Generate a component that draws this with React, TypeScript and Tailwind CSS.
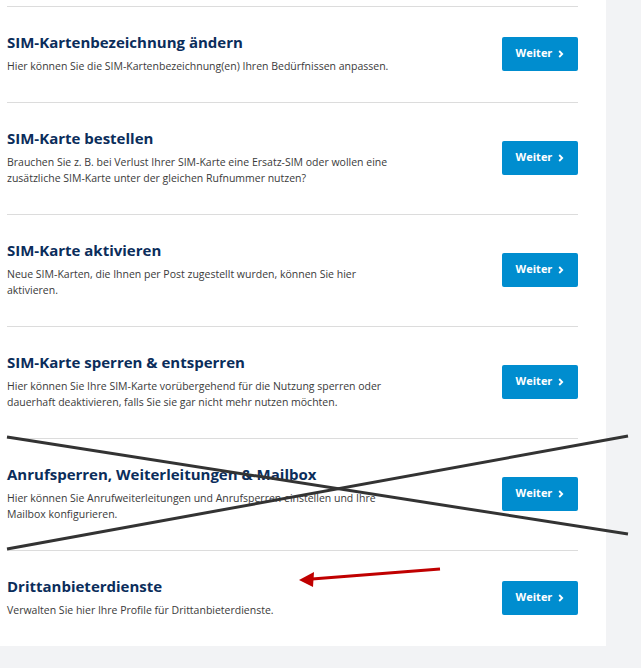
import React from "react";

const items = [
  {
    title: "SIM-Kartenbezeichnung ändern",
    text: "Hier können Sie die SIM-Kartenbezeichnung(en) Ihren Bedürfnissen anpassen.",
  },
  {
    title: "SIM-Karte bestellen",
    text: "Brauchen Sie z. B. bei Verlust Ihrer SIM-Karte eine Ersatz-SIM oder wollen eine zusätzliche SIM-Karte unter der gleichen Rufnummer nutzen?",
  },
  {
    title: "SIM-Karte aktivieren",
    text: "Neue SIM-Karten, die Ihnen per Post zugestellt wurden, können Sie hier aktivieren.",
  },
  {
    title: "SIM-Karte sperren & entsperren",
    text: "Hier können Sie Ihre SIM-Karte vorübergehend für die Nutzung sperren oder dauerhaft deaktivieren, falls Sie sie gar nicht mehr nutzen möchten.",
  },
  {
    title: "Anrufsperren, Weiterleitungen & Mailbox",
    text: "Hier können Sie Anrufweiterleitungen und Anrufsperren einstellen und Ihre Mailbox konfigurieren.",
  },
  {
    title: "Drittanbieterdienste",
    text: "Verwalten Sie hier Ihre Profile für Drittanbieterdienste.",
  },
];

const Row = ({ title, text, last }: { title: string; text: string; last: boolean }) => (
  <div
    className={`flex items-center justify-between pt-[26px] pb-[28px] ${last ? "" : "border-b border-[#dcdcdc]"}`}
  >
    <div className="w-[392px]">
      <h3 className="text-[15px] leading-[18px] font-bold text-[#0b2d5b]">{title}</h3>
      <p className="mt-[7px] text-[10.5px] leading-[16px] text-[#3a3a3a]">{text}</p>
    </div>
    <button className="flex h-[34px] w-[76px] items-center justify-center gap-[6px] rounded-[2px] bg-[#008dcf] text-[11px] font-bold text-white">
      Weiter
      <svg width="6" height="8" viewBox="0 0 6 8">
        <path d="M1.2 1 L4.2 4 L1.2 7" fill="none" stroke="white" strokeWidth="1.8" />
      </svg>
    </button>
  </div>
);

export default function App() {
  return (
    <div
      className="relative h-[668px] w-[641px] overflow-hidden bg-[#f2f3f5]"
      style={{ fontFamily: '"Open Sans", "Noto Sans", sans-serif' }}
    >
      <div className="w-[606px] bg-white pl-[7px] pr-[28px] pt-[6px]">
        <div className="border-t border-[#dcdcdc]">
          {items.map((it, i) => (
            <Row key={i} title={it.title} text={it.text} last={i === items.length - 1} />
          ))}
        </div>
      </div>

      {/* annotations drawn over the page */}
      <svg className="pointer-events-none absolute left-0 top-0" width="641" height="668">
        <line x1="7" y1="437" x2="628" y2="534" stroke="#333" strokeWidth="3" />
        <line x1="7" y1="549" x2="628" y2="436" stroke="#333" strokeWidth="3" />
        <line x1="440" y1="569" x2="312" y2="579" stroke="#c00000" strokeWidth="3" />
        <polygon points="299,580 314,572 313,587" fill="#c00000" />
      </svg>
    </div>
  );
}
